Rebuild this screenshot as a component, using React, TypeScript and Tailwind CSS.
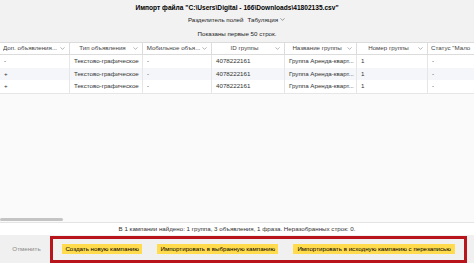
import { ChevronDown } from 'lucide-react';

const columns = [
    { label: 'Доп. объявления...', w: 'w-[70px]' },
    { label: 'Тип объявления', w: 'w-[73px]' },
    { label: 'Мобильное объя...', w: 'w-[69px]' },
    { label: 'ID группы', w: 'w-[73px]' },
    { label: 'Название группы', w: 'w-[72px]' },
    { label: 'Номер группы', w: 'w-[71px]' },
    { label: 'Статус "Мало', w: 'w-[46px]' },
];

const rows = [
    ['-', 'Текстово-графическое', '-', '4078222161', 'Группа Аренда-кварт...', '1', '-'],
    ['+', 'Текстово-графическое', '-', '4078222161', 'Группа Аренда-кварт...', '1', '-'],
    ['+', 'Текстово-графическое', '-', '4078222161', 'Группа Аренда-кварт...', '1', '-'],
];

export default function App() {
    return (
        <div className="w-[474px] h-[263px] overflow-hidden flex flex-col bg-[#fafafa] text-[6.2px] leading-none text-[#222] font-['Liberation_Sans',Arial,sans-serif]">
            {/* Header */}
            <div className="h-[42px] bg-[#f2f2f2] flex flex-col items-center pt-[3px]">
                <div className="font-bold text-black text-[6.6px] leading-[9px]">
                    Импорт файла "C:\Users\Digital - 166\Downloads\41802135.csv"
                </div>
                <div className="flex items-center gap-[4px] mt-[3px] leading-[9px]">
                    <span>Разделитель полей</span>
                    <span className="flex items-center gap-[1px]">
                        Табуляция
                        <ChevronDown size={7} strokeWidth={1.5} />
                    </span>
                </div>
                <div className="mt-[5px] leading-[9px]">Показаны первые 50 строк.</div>
            </div>

            {/* Table */}
            <div className="flex flex-col bg-white border-b border-[#e6e6e6]">
                <div className="flex h-[13px] border-y border-[#dcdcdc] bg-white">
                    {columns.map((c, i) => (
                        <div
                            key={i}
                            className={`${c.w} shrink-0 flex items-center ${i < 6 ? 'border-r' : ''} border-[#dcdcdc] px-[3px] text-[#444]`}
                        >
                            <span className={`flex-1 whitespace-nowrap overflow-hidden ${i === 0 || i === 6 ? 'text-left' : 'text-center'}`}>
                                {c.label}
                            </span>
                            {i < 6 && <ChevronDown size={7} strokeWidth={1.5} className="shrink-0 text-[#555]" />}
                        </div>
                    ))}
                </div>
                {rows.map((r, ri) => (
                    <div key={ri} className={`flex h-[12.5px] ${ri === 1 ? 'bg-[#f5f6f9]' : 'bg-white'}`}>
                        {r.map((cell, ci) => (
                            <div
                                key={ci}
                                className={`${columns[ci].w} shrink-0 flex items-center ${ci < 6 ? 'border-r' : ''} border-[#e6e6e6] px-[4px] whitespace-nowrap overflow-hidden text-[#333]`}
                            >
                                {cell}
                            </div>
                        ))}
                    </div>
                ))}
            </div>

            <div className="flex-1" />

            {/* Scrollbar */}
            <div className="h-[6px] flex items-center">
                <div className="w-[63px] h-[3px] bg-[#c4c4c4] rounded-full" />
            </div>
            <div className="border-t border-[#e4e4e4] bg-white h-[13px] flex items-center justify-center text-[#333]">
                В 1 кампании найдено: 1 группа, 3 объявления, 1 фраза. Неразобранных строк: 0.
            </div>

            {/* Footer */}
            <div className="h-[28px] bg-[#f0f0f0] flex items-center">
                <div className="w-[50px] pl-[3px] text-center text-[#888]">Отменить</div>
                <div className="w-[417px] h-[27px] border-[3px] border-[#b8141c] flex items-center px-[9px] gap-[15px]">
                    <div className="h-[10px] w-[81px] bg-[#ffdb4d] flex items-center justify-center text-black">
                        Создать новую кампанию
                    </div>
                    <div className="h-[10px] w-[122px] bg-[#ffdb4d] flex items-center justify-center text-black">
                        Импортировать в выбранную кампанию
                    </div>
                    <div className="h-[10px] w-[163px] bg-[#ffdb4d] flex items-center justify-center text-black">
                        Импортировать в исходную кампанию с перезаписью
                    </div>
                </div>
            </div>
        </div>
    );
}
